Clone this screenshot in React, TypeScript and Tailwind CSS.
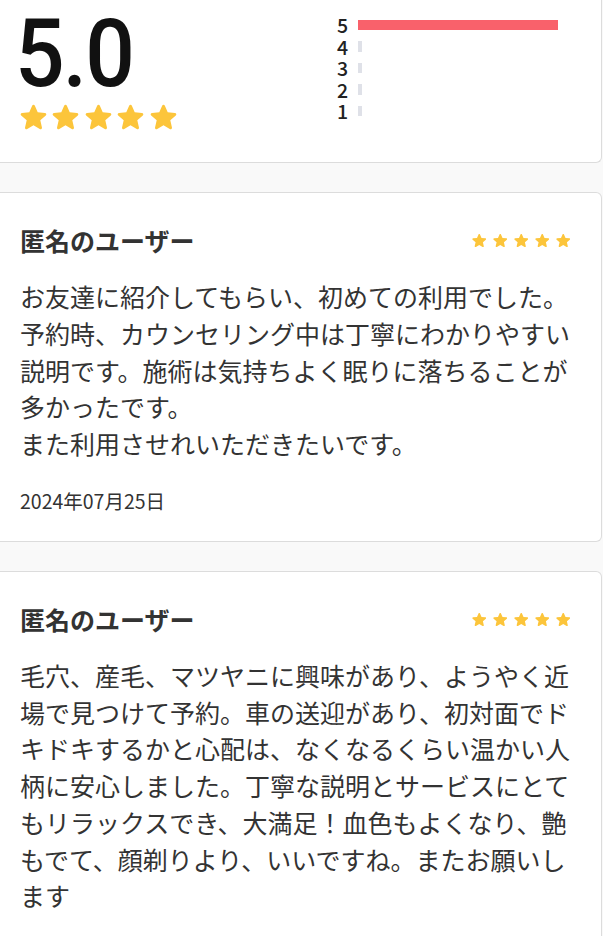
const reviews = [
  {
    name: '匿名のユーザー',
    body: 'お友達に紹介してもらい、初めての利用でした。予約時、カウンセリング中は丁寧にわかりやすい説明です。施術は気持ちよく眠りに落ちることが多かったです。\nまた利用させれいただきたいです。',
    date: '2024年07月25日',
  },
  {
    name: '匿名のユーザー',
    body: '毛穴、産毛、マツヤニに興味があり、ようやく近場で見つけて予約。車の送迎があり、初対面でドキドキするかと心配は、なくなるくらい温かい人柄に安心しました。丁寧な説明とサービスにとてもリラックスでき、大満足！血色もよくなり、艶もでて、顔剃りより、いいですね。またお願いします',
    date: '2024年07月18日',
  },
];

const bars = [
  { label: '5', pct: 100 },
  { label: '4', pct: 0 },
  { label: '3', pct: 0 },
  { label: '2', pct: 0 },
  { label: '1', pct: 0 },
];

function Star({ className }: { className: string }) {
  return (
    <svg viewBox="3 2.4 18 18" fill="currentColor" className={className}>
      <path d="M12 17.27l4.15 2.51c.76.46 1.69-.22 1.49-1.08l-1.1-4.72 3.67-3.18c.67-.58.31-1.68-.57-1.75l-4.83-.41-1.89-4.46c-.34-.81-1.49-.81-1.83 0L9.19 8.63l-4.83.41c-.88.07-1.24 1.17-.57 1.75l3.67 3.18-1.1 4.72c-.2.86.73 1.54 1.49 1.08L12 17.27z" />
    </svg>
  );
}

export default function App() {
  return (
    <div className="min-h-[936px] w-[603px] overflow-hidden bg-[#f9f9f9] font-['Noto_Sans_CJK_JP',sans-serif] text-[#333]">
      {/* Summary */}
      <div className="flex h-[163px] w-[602px] rounded-br-[6px] border-r border-b border-[#dcdcdc] bg-white">
        <div className="w-[336px] shrink-0 pl-[15px]">
          <div className="mt-[-1px] inline-block origin-left scale-x-[0.92] font-['Roboto',sans-serif] text-[95px] leading-[1.15] font-medium tracking-[-2px] text-[#111]">
            5.0
          </div>
          <div className="mt-[-5px] flex gap-[5.4px] pl-[5px] text-[#fcc53b]">
            {[...Array(5)].map((_, i) => (
              <Star key={i} className="h-[27px] w-[27px]" />
            ))}
          </div>
        </div>
        <div className="flex flex-col pt-[14px]">
          {bars.map((b) => (
            <div key={b.label} className="flex h-[21.5px] items-center">
              <span className="w-[13px] text-center text-[19.5px] leading-[21.5px] font-medium text-[#222]">{b.label}</span>
              <div className="ml-[9px] w-[200px]">
                <div
                  className={b.pct > 0 ? 'h-[10.5px] bg-[#f9616b]' : 'h-[10.5px] w-[4px] bg-[#dfe1e8]'}
                  style={b.pct > 0 ? { width: `${b.pct}%` } : undefined}
                ></div>
              </div>
            </div>
          ))}
        </div>
      </div>

      {/* Reviews */}
      {reviews.map((r, i) => (
        <div
          key={i}
          className="mt-[29px] w-[602px] rounded-r-[6px] border-y border-r border-[#dcdcdc] bg-white pt-[29px] pr-[31px] pb-[28px] pl-[20px]"
        >
          <div className="flex items-center justify-between">
            <div className="text-[25px] leading-[36px] font-bold">{r.name}</div>
            <div className="flex gap-[6.5px] text-[#fcc53b]">
              {[...Array(5)].map((_, j) => (
                <Star key={j} className="h-[14.5px] w-[14.5px]" />
              ))}
            </div>
          </div>
          <p className="mt-[20px] text-[25px] leading-[36.75px] whitespace-pre-line">{r.body}</p>
          <div className="mt-[27px] text-[19.5px] leading-[24px]">{r.date}</div>
        </div>
      ))}
    </div>
  );
}
